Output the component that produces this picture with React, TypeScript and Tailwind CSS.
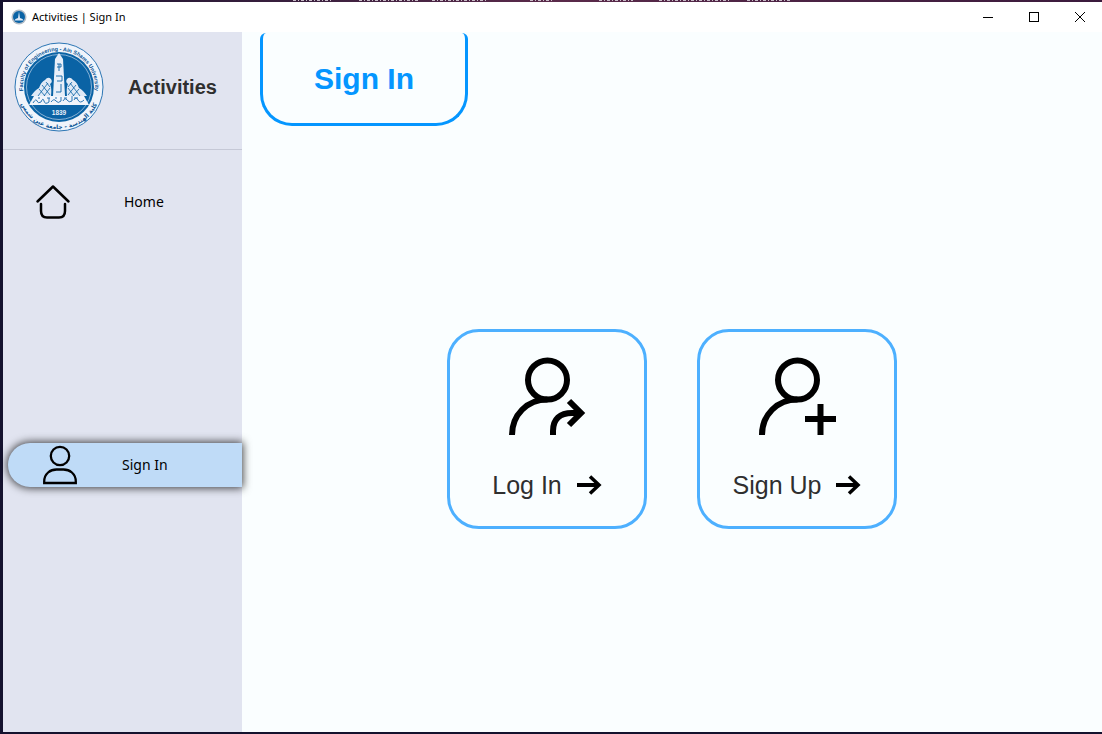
import React from "react";

function Eagle() {
  return (
    <g fill="#dfe9f6">
      <path d="M31 38 q3 -4 6 -1 q2 3 -1 5 q2 4 1 12 h-20 q4 -6 8 -8 q2 -6 6 -8z" />
      <path
        d="M28 43 l8 10 M25 47 l6 7 M32 40 l4 5 M34 41 l-10 13 M36 46 l-6 8"
        stroke="#0a63a5"
        strokeWidth="0.8"
        fill="none"
      />
    </g>
  );
}

function FacultySeal() {
  return (
    <svg viewBox="0 0 90 90" className="size-[90px] shrink-0" role="img" aria-label="Faculty seal">
      <defs>
        <path id="seal-top" d="M11.500 58 A36 36 0 1 1 78.500 58" />
        <path id="seal-bottom" d="M4 52 A41.500 41.500 0 0 0 86 52" />
      </defs>
      <circle cx="45" cy="45" r="44" fill="#f0f4fb" stroke="#2c76b4" strokeWidth="1" />
      <circle cx="45" cy="45" r="35" fill="#0a63a5" />
      <circle cx="45" cy="45" r="32.500" fill="none" stroke="#bcd3ea" strokeWidth="0.7" />
      <text fontFamily="Liberation Sans, sans-serif" fontWeight="700" fontSize="5.500" fill="#0a5596">
        <textPath href="#seal-top" startOffset="50%" textAnchor="middle">
          Faculty of Engineering - Ain Shams University
        </textPath>
      </text>
      <text fontFamily="DejaVu Sans, sans-serif" fontWeight="700" fontSize="6" fill="#0a5596">
        <textPath href="#seal-bottom" startOffset="50%" textAnchor="middle">
          كلية الهندسة - جامعة عين شمس
        </textPath>
      </text>
      <Eagle />
      <g transform="matrix(-1 0 0 1 90 0)">
        <Eagle />
      </g>
      <path d="M41 17 L45 11 L49 17 L51 54 H39 Z" fill="#e8eff9" />
      <path
        d="M43 22 h4 v3 h-4 M45 22 v7 M42 34 h6 v5 h-5 M47 42 v8 h-5"
        stroke="#0a63a5"
        strokeWidth="0.9"
        fill="none"
      />
      <path d="M20 54 H70 L75 63 H15 Z" fill="#f0f4fb" />
      <path
        d="M19 61 q3 -5 4 -2 t4 1 q2 -5 3 -1 t5 1 v-4 m2 4 q3 -4 5 -1 t5 0 v-4 m2 4 q2 -4 4 -1 t5 1 v-5 m2 4 q2 -4 4 0 t6 0 M24 56 h2 M33 56 h3 M41 56 h2 M50 56 h3 M60 56 h4"
        stroke="#2c76b4"
        strokeWidth="1"
        fill="none"
      />
      <text x="45" y="72.500" textAnchor="middle" fontFamily="Liberation Sans, sans-serif" fontWeight="700" fontSize="6.500" fill="#e8eff9">
        1839
      </text>
    </svg>
  );
}

function WindowIcon() {
  return (
    <svg viewBox="0 0 16 16" className="size-4" aria-hidden="true">
      <circle cx="8" cy="8" r="7.500" fill="#b3bcc6" />
      <circle cx="8" cy="8" r="6" fill="#0a63a5" />
      <path d="M8 2.500 L9 9 L11.500 10 L12.500 11.500 H3.500 L4.500 10 L7 9 Z" fill="#dfe9f6" />
    </svg>
  );
}

function HomeIcon() {
  return (
    <svg viewBox="0 0 36 36" className="size-9" fill="none" stroke="#000" strokeWidth="2.500" strokeLinecap="round" strokeLinejoin="round" aria-hidden="true">
      <path d="M2.500 17.500 L18 2.500 L33.500 17.500" />
      <path d="M6 20 V27 Q6 33.500 12 33.500 H24 Q30 33.500 30 27 V20" />
    </svg>
  );
}

function PersonIcon() {
  return (
    <svg viewBox="0 0 36 40" className="h-10 w-9" fill="none" stroke="#000" strokeWidth="2.300" aria-hidden="true">
      <circle cx="18" cy="11" r="9.200" />
      <path d="M2.200 38 V36.500 C2.200 28.500 8.500 24.500 14.500 24.500 H21.500 C27.500 24.500 33.800 28.500 33.800 36.500 V38 Z" />
    </svg>
  );
}

function AccountIcon({ children }: { children: React.ReactNode }) {
  return (
    <svg viewBox="0 0 80 80" className="size-20" fill="none" stroke="#000" strokeWidth="6" aria-hidden="true">
      <circle cx="40.500" cy="23" r="19.500" />
      <path d="M5 78 C5 58 20 42.500 40.500 42.500" />
      {children}
    </svg>
  );
}

function Arrow() {
  return (
    <svg viewBox="0 0 25 20" className="h-5 w-[25px]" fill="none" stroke="#000" strokeWidth="4" aria-hidden="true">
      <path d="M0 10 H22" />
      <path d="M13 1.500 L22 10 L13 18.500" strokeWidth="3.500" />
    </svg>
  );
}

function ChoiceCard({ label, children }: { label: string; children: React.ReactNode }) {
  return (
    <button
      type="button"
      className="flex size-50 flex-col items-center justify-between rounded-[32px] border-3 border-[#4db0ff] py-[25px]"
    >
      <AccountIcon>{children}</AccountIcon>
      <span className="flex items-center gap-[15px] text-[25px] leading-8 text-[#2f2f2f]">
        {label}
        <Arrow />
      </span>
    </button>
  );
}

function TitleBar() {
  return (
    <header className="flex h-[30px] items-center justify-between bg-white pl-2">
      <div className="flex items-center gap-[5px] font-['Noto_Sans',sans-serif] text-[11px] text-black">
        <WindowIcon />
        <span>Activities | Sign In</span>
      </div>
      <div className="flex h-full pb-px">
        <button type="button" aria-label="Minimize" className="flex w-[46px] items-center justify-center">
          <svg viewBox="0 0 10 10" className="size-[10px]" aria-hidden="true">
            <path d="M0 5.500 H10" stroke="#000" />
          </svg>
        </button>
        <button type="button" aria-label="Maximize" className="flex w-[46px] items-center justify-center">
          <svg viewBox="0 0 10 10" className="size-[10px]" aria-hidden="true">
            <rect x="0.500" y="0.500" width="9" height="9" fill="none" stroke="#000" />
          </svg>
        </button>
        <button type="button" aria-label="Close" className="flex w-[45px] items-center justify-center">
          <svg viewBox="0 0 10 10" className="size-[10px]" aria-hidden="true">
            <path d="M0 0 L10 10 M10 0 L0 10" stroke="#000" />
          </svg>
        </button>
      </div>
    </header>
  );
}

function Sidebar() {
  return (
    <aside className="relative z-10 flex w-[239px] shrink-0 flex-col bg-[#e1e4f0]">
      <div className="flex h-[118px] items-center gap-6 border-b border-[#c5c8d6] pb-[7px] pl-[11px]">
        <FacultySeal />
        <h1 className="text-xl font-bold text-[#2f2f2f]">Activities</h1>
      </div>
      <nav className="flex flex-1 flex-col pt-[30px] font-['Noto_Sans',sans-serif] text-sm text-black">
        <a href="#home" className="flex h-11 items-center gap-[53px] pl-8">
          <HomeIcon />
          Home
        </a>
        <a
          href="#sign-in"
          className="mt-[219px] ml-[5px] flex h-11 items-center gap-[44px] rounded-l-full rounded-r-xs bg-[#bfdbf7] pl-[34px] shadow-[0_0_8px_1px_rgba(0,0,0,0.75)]"
        >
          <PersonIcon />
          Sign In
        </a>
      </nav>
    </aside>
  );
}

export default function App() {
  return (
    <div className="flex min-h-screen flex-col border-b-2 border-l-3 border-[#14122e] bg-[#fafeff] font-['Liberation_Sans',Arial,sans-serif]">
      <div className="h-[2px] bg-linear-to-r from-[#17122f] via-[#5a2a4a] to-[#3a1a3c]">
        <svg className="ml-[290px] block h-[2px] w-[500px]" viewBox="0 0 500 2" aria-hidden="true">
          <path
            d="M0 0.500 H40 M66 0.500 H127 M139 0.500 H195 M237 0.500 H259 M306 0.500 H340 M366 0.500 H436 M454 0.500 H497"
            stroke="#c9bcc8"
            strokeDasharray="3 2 1 2"
          />
        </svg>
      </div>
      <TitleBar />
      <div className="flex flex-1">
        <Sidebar />
        <main className="flex flex-1 flex-col">
          <div className="mt-px ml-[18px] flex h-[93px] w-52 items-center justify-center rounded-t-md rounded-b-[32px] border-x-3 border-b-3 border-[#0496ff] pt-px">
            <h2 className="text-3xl font-bold text-[#0496ff]">Sign In</h2>
          </div>
          <div className="flex flex-1 flex-wrap items-center justify-center gap-[50px]">
            <ChoiceCard label="Log In">
              <path d="M46 78 V74 C46 62 53 56 65 56 H74" />
              <path d="M62 44 L74 56 L62 68" />
            </ChoiceCard>
            <ChoiceCard label="Sign Up">
              <path d="M48 62 H79 M63.500 47 V78" />
            </ChoiceCard>
          </div>
        </main>
      </div>
    </div>
  );
}
